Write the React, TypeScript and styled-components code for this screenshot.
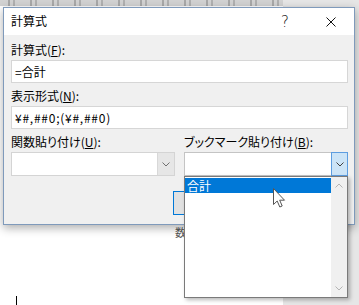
import React from "react";
import styled, { createGlobalStyle } from "styled-components";

const GlobalStyle = createGlobalStyle`
  html, body {
    margin: 0;
    padding: 0;
  }
  body {
    background: #ffffff;
    font-family: "Noto Sans CJK JP", "Noto Sans", sans-serif;
    font-size: 12px;
    color: #000;
  }
`;

const Screen = styled.div`
  position: relative;
  width: 359px;
  height: 305px;
  overflow: hidden;
  display: flex;
  flex-direction: column;
`;

const Ruler = styled.div`
  height: 6px;
  display: flex;
  flex-shrink: 0;
`;

const RulerScale = styled.div`
  width: 283px;
  background: repeating-linear-gradient(
      90deg,
      #d2d2d2 0 8px,
      #a8a8a8 8px 10px,
      #d2d2d2 10px 13px,
      #b0b0b0 13px 15px,
      #d2d2d2 15px 22px
    );
`;

const RulerRest = styled.div`
  flex: 1;
  background: #e6e6e6;
`;

const Workspace = styled.div`
  flex: 1;
  display: flex;
`;

const Page = styled.div`
  width: 283px;
  background: #ffffff;
  display: flex;
  flex-direction: column;
  padding: 220px 0 0 175px;
  box-sizing: border-box;
`;

const DocChar = styled.span`
  font-size: 11px;
  color: #555;
  line-height: 12px;
`;

const Caret = styled.div`
  width: 1px;
  height: 9px;
  background: #000;
  margin: auto 0 0 -159px;
`;

const Gutter = styled.div`
  flex: 1;
  background: #e6e6e6;
`;

/* dialog window */
const Dialog = styled.div`
  position: absolute;
  left: 3px;
  top: 7px;
  width: 352px;
  height: 218px;
  box-sizing: border-box;
  border: 1px solid #7f9abb;
  background: #f0f0f0;
  box-shadow: 0 3px 9px rgba(0, 0, 0, 0.32);
  display: flex;
  flex-direction: column;
`;

const TitleBar = styled.div`
  height: 27px;
  background: #ffffff;
  display: flex;
  align-items: center;
  padding-left: 7px;
`;

const Title = styled.span`
  flex: 1;
  font-size: 12px;
  line-height: 16px;
  padding-bottom: 2px;
`;

const CaptionButton = styled.div`
  width: 46px;
  height: 27px;
  display: flex;
  align-items: center;
  justify-content: center;
  font-family: "DejaVu Sans", sans-serif;
  font-size: 15px;
  font-weight: 300;
  color: #111;
`;

const Body = styled.div`
  flex: 1;
  padding: 7px 6px 0 7px;
  display: flex;
  flex-direction: column;
  gap: 5px;
`;

const Field = styled.div`
  display: flex;
  flex-direction: column;
  gap: 2px;
`;

const RowField = styled(Field)`
  flex: 1;
  min-width: 0;
`;

const Label = styled.div`
  line-height: 16px;
  height: 16px;
  font-feature-settings: "palt";
  white-space: nowrap;
`;

const TextBox = styled.div<{ $spaced?: boolean }>`
  height: 23px;
  box-sizing: border-box;
  border: 1px solid #d6d6d6;
  background: #fff;
  padding-left: 3px;
  line-height: 21px;
  white-space: nowrap;
  letter-spacing: ${({ $spaced }) => ($spaced ? "0.75px" : "0")};
`;

const Row = styled.div`
  display: flex;
  gap: 9px;
`;

const Combo = styled.div<{ $open?: boolean }>`
  height: 24px;
  box-sizing: border-box;
  border: 1px solid ${({ $open }) => ($open ? "#c4c4c4" : "#d4d4d4")};
  background: #fff;
  display: flex;
  justify-content: flex-end;
`;

const ComboButton = styled.div<{ $open?: boolean }>`
  width: 17px;
  margin: ${({ $open }) => ($open ? "-1px -1px -1px 0" : "0")};
  box-sizing: border-box;
  display: flex;
  align-items: center;
  justify-content: center;
  background: ${({ $open }) => ($open ? "#cce4f7" : "#e6e6e6")};
  border: ${({ $open }) => ($open ? "1px solid #5d9de0" : "none")};
  border-left: 1px solid ${({ $open }) => ($open ? "#5d9de0" : "#d8d8d8")};
`;

const Buttons = styled.div`
  display: flex;
  justify-content: flex-end;
  gap: 7px;
  margin-top: 10px;
`;

const PushButton = styled.div<{ $default?: boolean }>`
  width: 84px;
  height: 24px;
  box-sizing: border-box;
  border: 1px solid ${({ $default }) => ($default ? "#0078d7" : "#adadad")};
  background: #e1e1e1;
  display: flex;
  align-items: center;
  justify-content: center;
`;

/* drop-down list popup */
const ListPopup = styled.div`
  position: absolute;
  left: 184px;
  top: 176px;
  width: 164px;
  height: 122px;
  box-sizing: border-box;
  border: 1px solid #7a7a7a;
  background: #fff;
  box-shadow: 2px 2px 4px rgba(0, 0, 0, 0.28);
  display: flex;
`;

const Items = styled.div`
  flex: 1;
  padding-top: 1px;
`;

const Item = styled.div<{ $selected?: boolean }>`
  height: 15px;
  line-height: 15px;
  padding-left: 2px;
  background: ${({ $selected }) => ($selected ? "#0078d7" : "transparent")};
  color: ${({ $selected }) => ($selected ? "#fff" : "#000")};
`;

const ScrollBar = styled.div`
  width: 16px;
  background: #f0f0f0;
  display: flex;
  flex-direction: column;
  justify-content: space-between;
`;

const ScrollArrow = styled.div`
  height: 17px;
  display: flex;
  align-items: center;
  justify-content: center;
`;

const Pointer = styled.svg`
  position: absolute;
  left: 273px;
  top: 188px;
`;

const Chevron = ({ up, color = "#606060" }: { up?: boolean; color?: string }) => (
  <svg width="8" height="5" viewBox="0 0 8 5">
    <path
      d={up ? "M0.5 4.5 L4 1 L7.5 4.5" : "M0.5 0.5 L4 4 L7.5 0.5"}
      fill="none"
      stroke={color}
      strokeWidth="1"
    />
  </svg>
);

const CloseGlyph = () => (
  <svg width="10" height="10" viewBox="0 0 10 10">
    <path d="M0.5 0.5 L9.5 9.5 M9.5 0.5 L0.5 9.5" stroke="#111" strokeWidth="1" />
  </svg>
);

export default function App() {
  return (
    <Screen>
      <GlobalStyle />
      <Ruler>
        <RulerScale />
        <RulerRest />
      </Ruler>
      <Workspace>
        <Page>
          <DocChar>数</DocChar>
          <Caret />
        </Page>
        <Gutter />
      </Workspace>

      <Dialog>
        <TitleBar>
          <Title>計算式</Title>
          <CaptionButton>?</CaptionButton>
          <CaptionButton>
            <CloseGlyph />
          </CaptionButton>
        </TitleBar>
        <Body>
          <Field>
            <Label>
              計算式(<u>F</u>):
            </Label>
            <TextBox>=合計</TextBox>
          </Field>
          <Field>
            <Label>
              表示形式(<u>N</u>):
            </Label>
            <TextBox $spaced>¥#,##0;(¥#,##0)</TextBox>
          </Field>
          <Row>
            <RowField>
              <Label>
                関数貼り付け(<u>U</u>):
              </Label>
              <Combo>
                <ComboButton>
                  <Chevron color="#707070" />
                </ComboButton>
              </Combo>
            </RowField>
            <RowField>
              <Label>
                ブックマーク貼り付け(<u>B</u>):
              </Label>
              <Combo $open>
                <ComboButton $open>
                  <Chevron color="#404040" />
                </ComboButton>
              </Combo>
            </RowField>
          </Row>
          <Buttons>
            <PushButton $default>OK</PushButton>
            <PushButton>キャンセル</PushButton>
          </Buttons>
        </Body>
      </Dialog>

      <ListPopup>
        <Items>
          <Item $selected>合計</Item>
        </Items>
        <ScrollBar>
          <ScrollArrow>
            <Chevron up color="#b4b4b4" />
          </ScrollArrow>
          <ScrollArrow>
            <Chevron color="#b4b4b4" />
          </ScrollArrow>
        </ScrollBar>
      </ListPopup>

      <Pointer width="13" height="21" viewBox="0 0 13 21">
        <path
          d="M0.5 0.5 L0.5 16.5 L4.2 13 L6.8 19 L9.2 18 L6.7 12.2 L11.5 12.2 Z"
          fill="#fff"
          stroke="#555"
          strokeWidth="1"
          strokeLinejoin="round"
        />
      </Pointer>
    </Screen>
  );
}
